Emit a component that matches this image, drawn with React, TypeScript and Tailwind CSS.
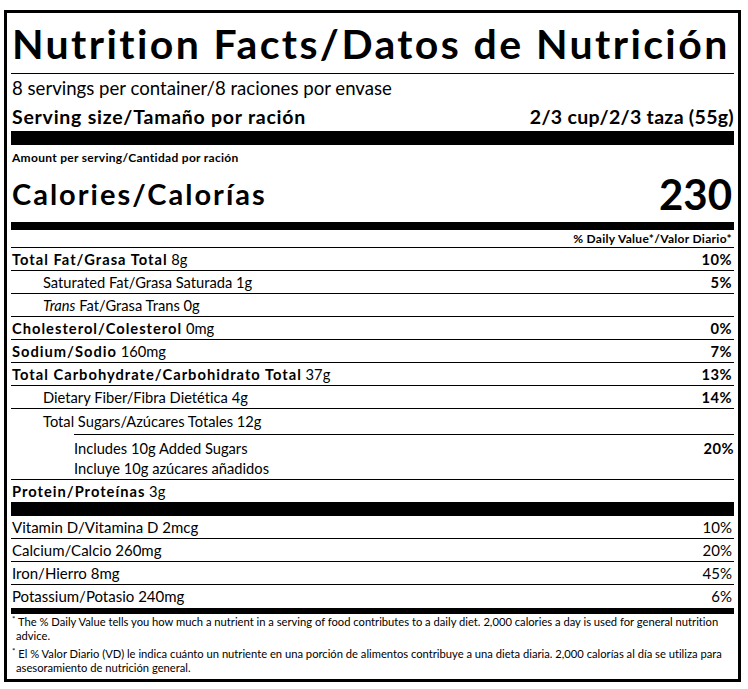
import React from 'react';

type Row = {
  label: React.ReactNode;
  amount: string;
  dv?: string;
  bold?: boolean;
  indent?: 0 | 1;
};

const nutrients: Row[] = [
  { label: 'Total Fat/Grasa Total', amount: '8g', dv: '10%', bold: true },
  { label: 'Saturated Fat/Grasa Saturada', amount: '1g', dv: '5%', indent: 1 },
  {
    label: (
      <>
        <i>Trans</i> Fat/Grasa Trans
      </>
    ),
    amount: '0g',
    indent: 1,
  },
  { label: 'Cholesterol/Colesterol', amount: '0mg', dv: '0%', bold: true },
  { label: 'Sodium/Sodio', amount: '160mg', dv: '7%', bold: true },
  { label: 'Total Carbohydrate/Carbohidrato Total', amount: '37g', dv: '13%', bold: true },
  { label: 'Dietary Fiber/Fibra Dietética', amount: '4g', dv: '14%', indent: 1 },
];

const vitamins = [
  { label: 'Vitamin D/Vitamina D 2mcg', dv: '10%' },
  { label: 'Calcium/Calcio 260mg', dv: '20%' },
  { label: 'Iron/Hierro 8mg', dv: '45%' },
  { label: 'Potassium/Potasio 240mg', dv: '6%' },
];

const NutrientRow = ({ row }: { row: Row }) => (
  <div className="flex h-[23px] items-center justify-between border-b border-black text-[14.7px] leading-none">
    <span className={row.indent ? 'pl-[32px]' : 'pl-[1px]'}>
      {row.bold ? <b className="font-bold tracking-[1px]">{row.label}</b> : row.label} {row.amount}
    </span>
    {row.dv && <b className="pr-[2px] font-bold tracking-[0.5px]">{row.dv}</b>}
  </div>
);

export default function App() {
  return (
    <div className="bg-white pl-[4px] pt-[10px] font-['Lato',sans-serif] text-black [font-variant-ligatures:none]">
      <div className="w-[737px] border-[3px] border-black px-[4px]">
        {/* header */}
        <div className="flex h-[61px] items-center border-b border-black pl-[1px]">
          <h1 className="whitespace-nowrap text-[41px] font-bold leading-none tracking-[2.4px]">
            Nutrition Facts/Datos de Nutrición
          </h1>
        </div>
        <div className="flex h-[29px] items-center pl-[1px] text-[18.6px] leading-none">
          8 servings per container/8 raciones por envase
        </div>
        <div className="flex h-[28px] items-center justify-between pl-[1px] text-[19.5px] font-bold leading-none">
          <span className="tracking-[0.75px]">Serving size/Tamaño por ración</span>
          <span className="tracking-[0.3px]">2/3 cup/2/3 taza (55g)</span>
        </div>
        <div className="h-[14px] bg-black" />

        {/* calories */}
        <div className="flex h-[26px] items-center pl-[1px] text-[12px] font-bold leading-none tracking-[0.3px]">
          Amount per serving/Cantidad por ración
        </div>
        <div className="flex h-[51px] items-center justify-between pb-[6px] pl-[1px] font-bold leading-none">
          <span className="text-[29px] tracking-[2px]">Calories/Calorías</span>
          <span className="pr-[2px] text-[42px]">230</span>
        </div>
        <div className="h-[8px] bg-black" />

        <div className="flex h-[18px] items-center justify-end border-b border-black pr-[2px] text-[12px] font-bold leading-none tracking-[0.3px]">
          % Daily Value*/Valor Diario*
        </div>

        {nutrients.map((row, i) => (
          <NutrientRow key={i} row={row} />
        ))}

        {/* sugars */}
        <div className="flex h-[25px] items-center pl-[32px] text-[14.7px] leading-none">
          Total Sugars/Azúcares Totales 12g
        </div>
        <div className="ml-[63px] border-b border-black" />
        <div className="flex h-[45px] items-start justify-between border-b border-black pt-[3px] text-[14.7px] leading-[20px]">
          <div className="pl-[63px]">
            <div>Includes 10g Added Sugars</div>
            <div>Incluye 10g azúcares añadidos</div>
          </div>
          <b className="font-bold tracking-[0.5px]">20%</b>
        </div>
        <div className="flex h-[22px] items-center pl-[1px] text-[14.7px] leading-none">
          <span>
            <b className="font-bold tracking-[1px]">Protein/Proteínas</b> 3g
          </span>
        </div>
        <div className="h-[14px] bg-black" />

        {/* vitamins and minerals */}
        {vitamins.map((v, i) => (
          <div
            key={v.label}
            className={`flex h-[23px] items-center justify-between text-[15px] leading-none ${
              i < vitamins.length - 1 ? 'border-b border-black' : ''
            }`}
          >
            <span className="pl-[1px]">{v.label}</span>
            <span className="pr-[2px]">{v.dv}</span>
          </div>
        ))}
        <div className="h-[6px] bg-black" />

        {/* footnotes */}
        <div className="flex flex-col gap-[4px] pb-[4px] pt-[1px] pl-[5px] text-[11.2px] leading-[14px]">
          <p className="-indent-[4px]">
            <sup className="text-[8px]">*</sup> The % Daily Value tells you how much a nutrient in a serving of
            food contributes to a daily diet. 2,000 calories a day is used for general nutrition
            <br />
            advice.
          </p>
          <p className="-indent-[4px]">
            <sup className="text-[8px]">*</sup> El % Valor Diario (VD) le indica cuánto un nutriente en una
            porción de alimentos contribuye a una dieta diaria. 2,000 calorías al día se utiliza para
            <br />
            asesoramiento de nutrición general.
          </p>
        </div>
      </div>
    </div>
  );
}
